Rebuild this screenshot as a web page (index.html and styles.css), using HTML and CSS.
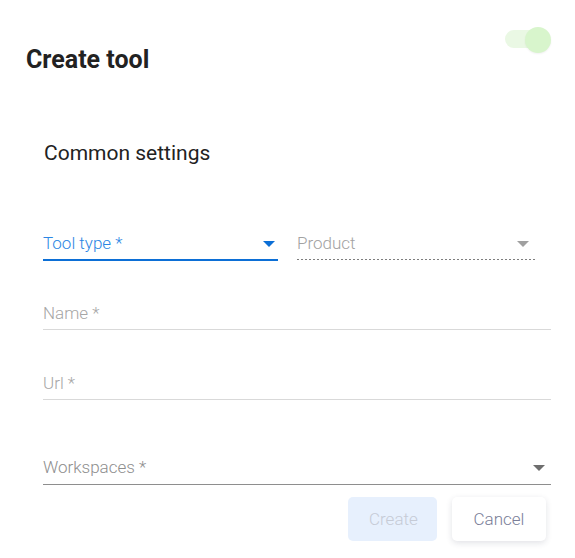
FILE: index.html
```html
<!DOCTYPE html>
<html>
<head>
<meta charset="utf-8">
<link rel="stylesheet" href="styles.css">
</head>
<body>
<div class="dialog">
  <div class="header">
    <h1 class="title">Create tool</h1>
    <div class="toggle"><span class="track"></span><span class="thumb"></span></div>
  </div>
  <div class="section">
    <h2 class="subtitle">Common settings</h2>
    <div class="row">
      <div class="field select active">
        <span class="label">Tool type *</span>
        <svg class="arrow arrow-active" width="12" height="6" viewBox="0 0 12 6"><path d="M0 0h12L6 6z"/></svg>
      </div>
      <div class="field select disabled">
        <span class="label">Product</span>
        <svg class="arrow arrow-disabled" width="12" height="6" viewBox="0 0 12 6"><path d="M0 0h12L6 6z"/></svg>
      </div>
    </div>
    <div class="field text name">
      <span class="label">Name *</span>
    </div>
    <div class="field text url">
      <span class="label">Url *</span>
    </div>
    <div class="field select workspaces">
      <span class="label">Workspaces *</span>
      <svg class="arrow arrow-dark" width="12" height="6" viewBox="0 0 12 6"><path d="M0 0h12L6 6z"/></svg>
    </div>
    <div class="actions">
      <button class="btn btn-create">Create</button>
      <button class="btn btn-cancel">Cancel</button>
    </div>
  </div>
</div>
</body>
</html>
```

FILE: styles.css
```css
html, body {
  margin: 0;
  padding: 0;
  background: #ffffff;
}
body {
  font-family: Roboto, "Liberation Sans", sans-serif;
  width: 575px;
  height: 558px;
  overflow: hidden;
}
.dialog {
  padding: 0 24px 0 25px;
}
.header {
  display: flex;
  justify-content: space-between;
  align-items: flex-start;
  padding-top: 27px;
}
.title {
  margin: 18px 0 0 1px;
  font-size: 25px;
  line-height: 29px;
  font-weight: 700;
  color: #222222;
}
.toggle {
  position: relative;
  width: 46px;
  height: 26px;
}
.track {
  position: absolute;
  left: 0;
  top: 3px;
  width: 34px;
  height: 18px;
  border-radius: 9px;
  background: #eaf8e4;
}
.thumb {
  position: absolute;
  left: 20px;
  top: 0;
  width: 26px;
  height: 26px;
  border-radius: 50%;
  background: #d8f5cc;
  box-shadow: 0 1px 2px rgba(0, 0, 0, 0.06);
}
.section {
  padding-left: 18px;
}
.subtitle {
  margin: 67px 0 0 1px;
  font-size: 21px;
  line-height: 25px;
  font-weight: 400;
  color: #222222;
}
.row {
  display: grid;
  grid-template-columns: 235px 236px;
  column-gap: 19px;
  align-items: start;
  margin-top: 67px;
}
.field {
  display: flex;
  align-items: center;
  justify-content: space-between;
  font-size: 17px;
  line-height: 20px;
  font-weight: 300;
  padding-bottom: 6px;
}
.label {
  white-space: nowrap;
}
.active {
  color: #2b86e4;
  border-bottom: 2px solid #0c6fd6;
}
.disabled {
  color: #a2a2a2;
  padding-bottom: 7px;
  background-image: linear-gradient(to right, #7e7e7e 0 2px, transparent 2px 4px);
  background-size: 4px 1px;
  background-repeat: repeat-x;
  background-position: left bottom;
  margin-right: -2px;
}
.arrow {
  flex: none;
  margin-top: 2px;
}
.arrow-active {
  fill: #0c6fd6;
  margin-right: 3px;
}
.arrow-disabled {
  fill: #a0a0a0;
  margin-right: 6px;
}
.arrow-dark {
  fill: #6e6e6e;
  margin-right: 6px;
}
.text {
  color: #a6a6a6;
  border-bottom: 1px solid #d9d9d9;
}
.name {
  margin-top: 42px;
}
.url {
  margin-top: 43px;
}
.workspaces {
  margin-top: 57px;
  color: #8e8e8e;
  padding-bottom: 7px;
  border-bottom: 1px solid #8e8e8e;
}
.actions {
  display: flex;
  justify-content: flex-end;
  gap: 15px;
  margin-top: 12px;
  padding-right: 5px;
}
.btn {
  height: 44px;
  border: none;
  border-radius: 5px;
  font-family: Roboto, "Liberation Sans", sans-serif;
  font-size: 17px;
  font-weight: 300;
  padding: 0 21px;
  cursor: pointer;
}
.btn-create {
  background: #e7f0fd;
  color: #c6cbd6;
  width: 89px;
}
.btn-cancel {
  background: #ffffff;
  color: #7a7e98;
  width: 94px;
  box-shadow: 0 2px 6px rgba(40, 50, 80, 0.14);
}
```
